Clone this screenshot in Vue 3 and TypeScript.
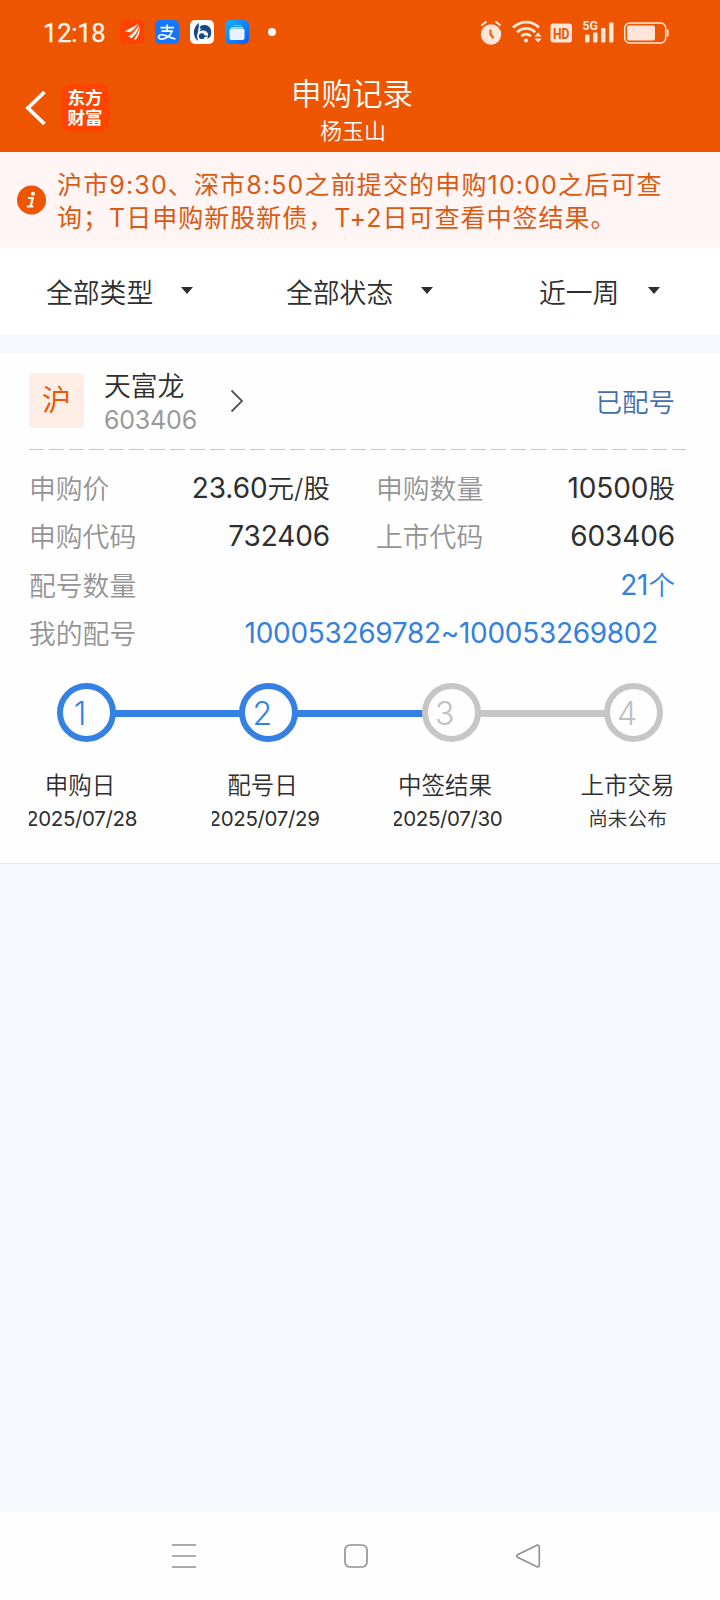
<script setup lang="ts">
interface Filter { label: string; cls: string }
interface Field { label: string; value: string; unit?: string }
interface Step { n: number; title: string; date: string; done: boolean; cjk?: boolean }

const filters: Filter[] = [
  { label: '全部类型', cls: 'f-type' },
  { label: '全部状态', cls: 'f-state' },
  { label: '近一周', cls: 'f-range' },
]

const fields: Field[] = [
  { label: '申购价', value: '23.60', unit: '元/股' },
  { label: '申购数量', value: '10500', unit: '股' },
  { label: '申购代码', value: '732406' },
  { label: '上市代码', value: '603406' },
]

const steps: Step[] = [
  { n: 1, title: '申购日', date: '2025/07/28', done: true },
  { n: 2, title: '配号日', date: '2025/07/29', done: true },
  { n: 3, title: '中签结果', date: '2025/07/30', done: false },
  { n: 4, title: '上市交易', date: '尚未公布', done: false, cjk: true },
]
</script>

<template>
  <div class="screen">
    <header class="top">
      <div class="status">
        <span class="time">12:18</span>
        <svg class="app" viewBox="0 0 24 24">
          <rect width="24" height="24" rx="5" fill="#ff4200" />
          <path d="M4.500 11.500C8 9.500 12 7 18.500 4c-2 3-4.500 6-8 8.500-1.500-.8-3.500-1-6-1z" fill="#fff" />
          <path d="M8 17c4-2.500 8-7 11-12-.2 5.500-3.500 10-8 13.500.1-1.200-1-1.800-3-1.500z" fill="#fff" />
          <path d="M13.500 19.500c3-3.500 5.500-8 6-13 .8 4.500-.5 9.500-4 13.500-.5-.6-1-.8-2-.5z" fill="#fff" />
          <path d="M7.500 13.500C11 12 15.500 8.500 18.500 4.500" stroke="#ff4200" stroke-width=".6" fill="none" />
        </svg>
        <svg class="app" viewBox="0 0 24 24">
          <rect width="24" height="24" rx="5" fill="#1477fe" />
          <path d="M5.500 7.700h13.500M12.200 4.500v6.500M6.500 11.200h10.500c-1.500 4.500-6 8-10 8-2.800 0-4-1.500-3.300-3 1-2.200 4.500-1.500 7.500-.3 3.300 1.300 6 2.600 9.300 3.100" stroke="#fff" stroke-width="1.700" fill="none" />
        </svg>
        <svg class="app" viewBox="0 0 24 24">
          <rect width="24" height="24" rx="5" fill="#fff" />
          <path d="M9 3C5 5.500 3.500 10 4 14c.4 3.500 1.800 5.500 4.500 7-1.600-3-1.800-6-.5-9 .7-4 .8-6.500 1-9z" fill="#164b88" />
          <path d="M9.500 7C14 3 21.500 5.500 21.300 12.500c0 3.500-1.500 5.500-4.300 6.500 1.800-3 1.400-6.300-1-7.800C14 10 11 10.300 8 12c3-1.500 3.500-3 1.500-5z" fill="#164b88" />
          <circle cx="11.800" cy="16.200" r="2.900" fill="#164b88" />
          <path d="M12 16.200h5.500" stroke="#164b88" stroke-width="1.300" />
        </svg>
        <svg class="app" viewBox="0 0 24 24">
          <defs>
            <linearGradient id="wallet" x1="0" y1="0" x2="1" y2="1">
              <stop offset="0" stop-color="#16b0fb" />
              <stop offset="1" stop-color="#0b5bfa" />
            </linearGradient>
          </defs>
          <rect width="24" height="24" rx="5" fill="url(#wallet)" />
          <path d="M9 5.500h7" stroke="#6fc8ff" stroke-width="1" stroke-linecap="round" />
          <path d="M6.500 7.700h11" stroke="#b9e0ff" stroke-width="1.200" stroke-linecap="round" />
          <rect x="4.500" y="8.500" width="15" height="11.500" rx="2" fill="#e9f3ff" />
        </svg>
        <i class="dot" />
        <svg class="sys" viewBox="0 0 190 26" fill="#ffe6d9">
          <circle cx="11" cy="15.500" r="10.200" />
          <path d="M1.500 6.500l5-4M20.500 6.500l-5-4" stroke="#ffe6d9" stroke-width="2.200" />
          <path d="M10.500 10.500v5l3 3.500" stroke="#ee5500" stroke-width="2" fill="none" />
          <g fill="none" stroke="#ffe6d9" stroke-width="2.700">
            <path d="M33 8.500c8-7.300 18.500-7.300 26 0" />
            <path d="M37 13.200c5.800-5 12.800-5 18.200 0" />
            <path d="M41.300 17.200c3.200-2.700 6.500-2.700 9.600 0" />
          </g>
          <circle cx="46" cy="21.500" r="2.100" />
          <path d="M54.500 17.500l3.600-4 3.600 4zM54.500 19.500l3.600 4 3.600-4z" />
          <rect x="70.500" y="4.500" width="21.500" height="19" rx="3" />
          <text x="73" y="19.500" class="hd" fill="#ee5500" textLength="16.500" lengthAdjust="spacingAndGlyphs">HD</text>
          <text x="102.500" y="11" class="g5" textLength="15.500" lengthAdjust="spacingAndGlyphs">5G</text>
          <rect x="105" y="15.500" width="4.500" height="8" rx="1" />
          <rect x="113" y="13.500" width="4.500" height="10" rx="1" />
          <rect x="121" y="9" width="4.500" height="14.500" rx="1" />
          <rect x="129" y="3.500" width="4.500" height="20" rx="1" />
          <rect x="144.700" y="4" width="41" height="20" rx="5" fill="none" stroke="#ffe6d9" stroke-width="1.500" />
          <rect x="147" y="6.500" width="28" height="15" rx="2" />
          <path d="M187.700 10.500v7" stroke="#ffe6d9" stroke-width="1.800" />
        </svg>
      </div>
      <div class="bar">
        <svg class="back" viewBox="0 0 22 36"><path d="M19.500 2L3 18l16.500 16" fill="none" stroke="#fff" stroke-width="3.800" /></svg>
        <div class="logo">东方<br>财富</div>
        <div class="titles">
          <h1>申购记录</h1>
          <p>杨玉山</p>
        </div>
      </div>
    </header>

    <section class="notice">
      <svg class="info" viewBox="0 0 30 30">
        <circle cx="15.500" cy="15" r="14.500" fill="#ee5500" />
        <circle cx="17" cy="8.800" r="2" fill="#fff" />
        <path d="M12 13h4.700l-2 8.500M10.800 21.500h6.500" fill="none" stroke="#fff" stroke-width="2.200" />
      </svg>
      <p>
        <span class="l1">沪市9:30、深市8:50之前提交的申购10:00之后可查</span><br>
        <span class="l2">询；T日申购新股新债，T+2日可查看中签结果。</span>
      </p>
    </section>

    <nav class="filters">
      <div v-for="f in filters" :key="f.label" class="filter" :class="f.cls">
        <span>{{ f.label }}</span>
        <i class="caret" />
      </div>
    </nav>

    <main class="card">
      <div class="stock">
        <span class="market">沪</span>
        <div class="ident">
          <span class="name">天富龙</span>
          <span class="code">603406</span>
        </div>
        <svg class="chev" viewBox="0 0 14 24"><path d="M1.500 1.500L12 12 1.500 22.500" fill="none" stroke="#555" stroke-width="1.800" /></svg>
        <span class="state">已配号</span>
      </div>
      <div class="dashes" />
      <div class="fields">
        <div v-for="f in fields" :key="f.label" class="field">
          <span class="label">{{ f.label }}</span>
          <span class="value">{{ f.value }}<span v-if="f.unit" class="unit">{{ f.unit }}</span></span>
        </div>
        <div class="field wide">
          <span class="label">配号数量</span>
          <span class="value blue">21<span class="unit">个</span></span>
        </div>
        <div class="field wide">
          <span class="label">我的配号</span>
          <span class="value blue range">100053269782~100053269802</span>
        </div>
      </div>
      <div class="track">
        <template v-for="(s, i) in steps" :key="s.n">
          <div class="node" :class="{ done: s.done }"><span>{{ s.n }}</span></div>
          <i v-if="i < steps.length - 1" class="link" :class="{ done: s.done }" />
        </template>
      </div>
      <div class="captions">
        <div v-for="s in steps" :key="s.n" class="caption">
          <span class="ct">{{ s.title }}</span>
          <span class="cd" :class="{ cjk: s.cjk }">{{ s.date }}</span>
        </div>
      </div>
    </main>

    <footer class="sysnav">
      <svg viewBox="0 0 26 26"><path d="M1 2h24M1 13h24M1 24h24" /></svg>
      <svg viewBox="0 0 26 26"><rect x="2" y="2" width="22" height="22" rx="5" /></svg>
      <svg viewBox="0 0 26 26"><path d="M22 2.200L3 11.500q-2.500 1.500 0 3L22 23.800q2.300.5 2.300-1.800V4q0-2.300-2.300-1.800z" /></svg>
    </footer>
  </div>
</template>

<style>
body { margin: 0; }
</style>

<style scoped>
* { box-sizing: border-box; }
h1, p { margin: 0; font-weight: 350; }
.screen {
  width: 720px; height: 1600px; overflow: hidden;
  display: flex; flex-direction: column;
  background: #f6faff; color: #2e2e2e;
  font-family: Inter, "Noto Sans CJK SC", sans-serif; font-weight: 350;
  white-space: nowrap;
}
.top { height: 152px; background: #ee5500; color: #fff; }
.status { height: 64px; display: flex; align-items: center; padding-left: 43px; }
.time { width: 77px; font: 400 25.500px/30px Roboto, sans-serif; color: #fff4ec; letter-spacing: -.2px; padding-top: 1px; -webkit-text-stroke: .3px #fff4ec; }
.app { width: 24px; height: 24px; margin-right: 11px; }
.dot { width: 8px; height: 8px; border-radius: 50%; background: #fff; margin-left: 8px; }
.sys { width: 190px; height: 26px; margin-left: 204px; }
.hd { font: 700 15px Roboto, sans-serif; }
.g5 { font: 700 12.500px Roboto, sans-serif; }
.bar { height: 88px; display: flex; align-items: flex-start; padding-left: 25px; }
.back { width: 22px; height: 36px; margin-top: 26px; }
.logo {
  width: 48px; height: 48px; margin: 20px 0 0 14px; border-radius: 10px; background: #ff4400;
  text-align: center; padding-top: 3px;
  font: 700 17.500px/20px "Noto Sans CJK SC", sans-serif;
}
.titles { width: 200px; margin-left: 143px; display: flex; flex-direction: column; align-items: center; }
.titles h1 { font-size: 30.500px; line-height: 40px; margin-top: 10px; }
.titles p { font-size: 22px; line-height: 30px; margin: 2px 0 0 2px; }

.notice { height: 96px; background: #fff5f5; display: flex; padding: 17px 0 0 16px; color: #d95b12; }
.info { width: 30px; height: 30px; margin-top: 16px; }
.notice p { margin-left: 11px; font-size: 25px; line-height: 33px; font-weight: 400; }
.l1 { letter-spacing: 1.150px; }
.l2 { letter-spacing: 1px; }

.filters { height: 86px; background: #fff; display: flex; align-items: center; font-size: 26.800px; padding-left: 46px; }
.filter { display: flex; align-items: center; width: 240px; flex-shrink: 0; }
.filter span { width: 134px; }
.f-range { padding-left: 13px; }
.f-range span { width: 108px; }
.caret { margin: -1px 0 0 1px; border: 6.500px solid transparent; border-top: 7.500px solid #2e2e2e; border-bottom: 0; }

.card { margin-top: 19px; height: 511px; background: #fefefe; border-bottom: 1px solid #e6e9ee; }
.stock { height: 96px; display: flex; padding: 20px 45px 0 29px; }
.market {
  width: 55px; height: 55px; border-radius: 4px; background: #ffeee6; color: #e8590c;
  font-size: 29px; line-height: 55px; text-align: center; font-weight: 400;
}
.ident { width: 146px; padding-left: 20px; display: flex; flex-direction: column; }
.name { font-size: 26.800px; line-height: 30px; margin-top: -2px; }
.code { font-size: 25px; line-height: 30px; margin-top: 4px; color: #999; font-weight: 400; letter-spacing: -.2px; }
.chev { width: 14px; height: 24px; margin-top: 16px; }
.state { margin-left: auto; font-size: 26.500px; line-height: 40px; margin-top: 9px; color: #3f6fb0; }
.dashes { height: 1px; margin: 0 34px 0 29px; background: repeating-linear-gradient(90deg, #c4c4c4 0 15px, transparent 15px 20.100px); }
.fields { display: grid; grid-template-columns: 301px 299px; column-gap: 46px; padding: 14px 0 0 29px; grid-auto-rows: 48.400px; }
.field { display: flex; justify-content: space-between; line-height: 48px; }
.wide { grid-column: span 2; }
.label { font-size: 26.800px; color: #949494; padding-top: 1px; }
.value { font-size: 28px; font-weight: 400; letter-spacing: -.1px; }
.unit { font-size: 26.500px; font-weight: 350; letter-spacing: .1px; }
.blue { color: #3580dc; }
.range { margin-right: 17px; letter-spacing: -.3px; }
.track { display: flex; align-items: center; height: 59px; margin: 25px 57px 0; }
.node {
  width: 59px; height: 59px; border: 6px solid #c6c6c6; border-radius: 50%; color: #c0c0c0; flex-shrink: 0;
  font-size: 32px; line-height: 49px; text-align: center; padding-right: 13px;
}
.node.done { border-color: #3480e3; color: #3480e3; }
.link { flex: 1; height: 7px; margin: 2px -1px 0; background: #c6c6c6; }
.link.done { background: #3480e3; }
.captions { display: flex; margin: 27px 0 0 29px; }
.caption { width: 109px; margin-right: 73.500px; overflow: hidden; display: flex; flex-direction: column; flex-shrink: 0; }
.ct { width: 102px; text-align: center; font-size: 23.500px; line-height: 34px; }
.cd { margin-left: -3px; font-size: 20.500px; line-height: 32px; font-weight: 400; letter-spacing: -.35px; }
.cd.cjk { margin-left: 0; width: 102px; text-align: center; font-size: 19.700px; font-weight: 350; letter-spacing: 0; }

.sysnav { margin-top: auto; height: 88px; background: #fefefe; display: flex; align-items: center; gap: 146px; padding-left: 171px; }
.sysnav svg { width: 26px; height: 26px; fill: none; stroke: #929292; stroke-width: 1.700; }
</style>
